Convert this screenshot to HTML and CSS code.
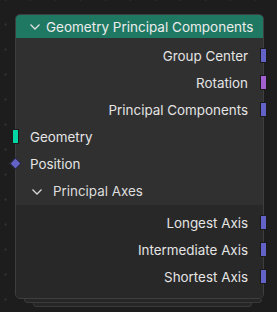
FILE: index.html
```html
<!DOCTYPE html>
<html lang="en">
<head>
  <meta charset="UTF-8">
  <title>Geometry Principal Components</title>
  <link rel="stylesheet" href="styles.css">
</head>
<body>
<div class="canvas">
  <div class="node">
    <div class="node-header">
      <svg class="chevron" width="10" height="6" viewBox="0 0 10 6"><polyline points="0.5,0.5 5,5 9.5,0.5" fill="none" stroke="#e0e0e0" stroke-width="1.3"/></svg>
      <span>Geometry Principal Components</span>
    </div>
    <div class="node-body">
      <div class="row out"><span>Group Center</span><i class="socket vec"></i></div>
      <div class="row out"><span>Rotation</span><i class="socket rot"></i></div>
      <div class="row out"><span>Principal Components</span><i class="socket vec"></i></div>
      <div class="row in"><i class="socket geo"></i><span>Geometry</span></div>
      <div class="row in"><i class="socket diamond"></i><span>Position</span></div>
      <div class="panel-head">
        <svg class="chevron" width="10" height="6" viewBox="0 0 10 6"><polyline points="0.5,0.5 5,5 9.5,0.5" fill="none" stroke="#d8d8d8" stroke-width="1.3"/></svg>
        <span>Principal Axes</span>
      </div>
      <div class="panel-body">
        <div class="row out"><span>Longest Axis</span><i class="socket vec"></i></div>
        <div class="row out"><span>Intermediate Axis</span><i class="socket vec"></i></div>
        <div class="row out"><span>Shortest Axis</span><i class="socket vec"></i></div>
      </div>
    </div>
  </div>
  <div class="stack s1"></div>
  <div class="stack s2"></div>
</div>
</body>
</html>
```

FILE: styles.css
```css
html, body {
  margin: 0;
  height: 100%;
}
body {
  background-color: #1d1d1d;
  background-image: radial-gradient(circle, #2c2c2c 1px, transparent 1.5px);
  background-size: 25px 25px;
  background-position: -7px -13px;
  font-family: Inter, "Noto Sans", sans-serif;
  font-size: 13.4px;
  color: #e4e4e4;
}
.canvas {
  padding: 14px 0 0 15px;
  width: 249px;
}
.node {
  position: relative;
  background: #303030;
  border: 1px solid #3e3e3e;
  border-radius: 5px;
}
.node-header {
  display: flex;
  align-items: center;
  height: 23px;
  background: #1f7862;
  border-radius: 4px 4px 0 0;
  padding-left: 14px;
  color: #ececec;
  font-size: 13.5px;
}
.chevron {
  margin-right: 6px;
  margin-top: 1px;
}
.node-body {
  padding-top: 4px;
}
.row {
  position: relative;
  display: flex;
  align-items: center;
  height: 27px;
}
.row.out {
  justify-content: flex-end;
  padding-right: 15px;
}
.row.in {
  padding-left: 14px;
}
.socket {
  position: absolute;
  display: block;
  box-sizing: border-box;
  border: 1px solid #1a1a1a;
}
.row.out .socket {
  right: -4px;
  top: 6px;
  width: 7px;
  height: 15px;
}
.row.in .socket {
  left: -4px;
  top: 6px;
  width: 7px;
  height: 15px;
}
.vec { background: #6363c7; }
.rot { background: #a360d0; }
.geo { background: #00d6a3; }
.row.in .diamond {
  left: -5px;
  top: 9px;
  width: 9px;
  height: 9px;
  background: #6363c7;
  transform: rotate(45deg);
}
.panel-head {
  display: flex;
  align-items: center;
  height: 28px;
  padding-left: 16px;
  color: #dedede;
}
.panel-head .chevron {
  margin-right: 11px;
}
.panel-body {
  background: #282828;
  padding: 4px 0 8px;
  border-radius: 0 0 4px 4px;
}
.stack {
  height: 3px;
  background: #262626;
  border: 1px solid #3a3a3a;
  border-top: none;
  border-radius: 0 0 4px 4px;
}
.s1 {
  margin: 0 2px 0 9px;
}
.s2 {
  margin: 0 12px 0 18px;
}
```
